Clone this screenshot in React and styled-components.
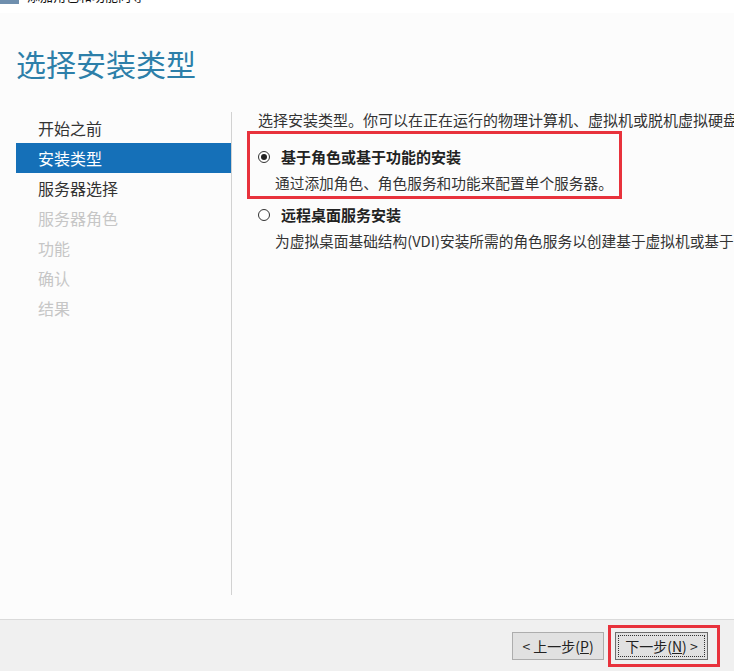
import styled, { createGlobalStyle } from "styled-components";

const GlobalStyle = createGlobalStyle`
  html, body {
    margin: 0;
    padding: 0;
    background: #fcfcfc;
  }
  * {
    box-sizing: border-box;
  }
`;

const steps = [
  { label: "开始之前", state: "done" },
  { label: "安装类型", state: "active" },
  { label: "服务器选择", state: "done" },
  { label: "服务器角色", state: "disabled" },
  { label: "功能", state: "disabled" },
  { label: "确认", state: "disabled" },
  { label: "结果", state: "disabled" },
];

const options = [
  {
    title: "基于角色或基于功能的安装",
    desc: "通过添加角色、角色服务和功能来配置单个服务器。",
    checked: true,
    marked: true,
  },
  {
    title: "远程桌面服务安装",
    desc: "为虚拟桌面基础结构(VDI)安装所需的角色服务以创建基于虚拟机或基于会话的桌面部署。",
    checked: false,
    marked: false,
  },
];

const App = () => {
  return (
    <Window>
      <GlobalStyle />
      <TitleBar>
        <TitleIcon />
        <TitleText>添加角色和功能向导</TitleText>
      </TitleBar>
      <Header>
        <Heading>选择安装类型</Heading>
      </Header>
      <Body>
        <Sidebar>
          {steps.map((step) => (
            <Step key={step.label} $state={step.state}>
              {step.label}
            </Step>
          ))}
        </Sidebar>
        <Content>
          <Intro>
            选择安装类型。你可以在正在运行的物理计算机、虚拟机或脱机虚拟硬盘(VHD)上安装角色和功能。
          </Intro>
          {options.map((opt) => (
            <Frame key={opt.title} $marked={opt.marked}>
              <Option $marked={opt.marked}>
                <OptionHead>
                  <Radio $checked={opt.checked} />
                  <OptionTitle>{opt.title}</OptionTitle>
                </OptionHead>
                <OptionDesc>{opt.desc}</OptionDesc>
              </Option>
            </Frame>
          ))}
        </Content>
      </Body>
      <Footer>
        <Button>
          &lt; 上一步(<u>P</u>)
        </Button>
        <Highlight>
          <Button $focused>
            <FocusRing>
              下一步(<u>N</u>) &gt;
            </FocusRing>
          </Button>
        </Highlight>
      </Footer>
    </Window>
  );
};

export default App;

const Window = styled.div`
  width: 734px;
  height: 671px;
  display: flex;
  flex-direction: column;
  overflow: hidden;
  background: #fcfcfc;
  font-family: "Noto Sans CJK SC", "Microsoft YaHei", sans-serif;
  color: #333;
`;

const TitleBar = styled.div`
  height: 13px;
  flex-shrink: 0;
  display: flex;
  align-items: flex-start;
  gap: 8px;
  background: #ffffff;
  overflow: hidden;
`;

const TitleIcon = styled.div`
  width: 19px;
  height: 4px;
  background: #6f8fae;
`;

const TitleText = styled.div`
  margin-top: -12px;
  font-size: 13px;
  line-height: 16px;
  color: #111;
`;

const Header = styled.div`
  height: 99px;
  flex-shrink: 0;
  padding: 30px 0 0 16px;
`;

const Heading = styled.h1`
  margin: 0;
  font-size: 30px;
  line-height: 40px;
  font-weight: 400;
  color: #2d7fa9;
`;

const Body = styled.div`
  height: 483px;
  flex-shrink: 0;
  display: flex;
  margin-bottom: 24px;
`;

const Sidebar = styled.div`
  width: 232px;
  flex-shrink: 0;
  padding: 1px 0 0 16px;
  border-right: 1px solid #d2d2d2;
`;

const Step = styled.div`
  height: 30px;
  line-height: 30px;
  padding-left: 22px;
  font-size: 16px;
  background: ${(p) => (p.$state === "active" ? "#1570b8" : "transparent")};
  color: ${(p) =>
    p.$state === "active" ? "#fff" : p.$state === "disabled" ? "#c6c6c6" : "#333"};
`;

const Content = styled.div`
  flex: 1;
  min-width: 0;
  margin-top: -2px;
  padding-left: 15px;
  overflow: hidden;
  white-space: nowrap;
`;

const Intro = styled.div`
  padding-left: 11px;
  font-size: 15px;
  line-height: 20px;
  margin-bottom: 1px;
`;

const Frame = styled.div`
  width: 375px;
  border: 3px solid ${(p) => (p.$marked ? "#e8323c" : "transparent")};
`;

const Option = styled.div`
  padding: ${(p) => (p.$marked ? "13px 0 3px 8px" : "3px 0 0 8px")};
`;

const OptionHead = styled.div`
  display: flex;
  align-items: center;
  height: 20px;
`;

const Radio = styled.span`
  width: 12px;
  height: 12px;
  border-radius: 50%;
  border: 1px solid #333;
  background: #fff;
  display: flex;
  align-items: center;
  justify-content: center;
  margin-right: 11px;

  &::after {
    content: "";
    width: 6px;
    height: 6px;
    border-radius: 50%;
    background: #222;
    display: ${(p) => (p.$checked ? "block" : "none")};
  }
`;

const OptionTitle = styled.span`
  font-size: 15px;
  font-weight: 700;
  line-height: 20px;
  color: #222;
`;

const OptionDesc = styled.div`
  margin-top: 6px;
  padding-left: 17px;
  font-size: 14.7px;
  line-height: 20px;
`;

const Footer = styled.div`
  flex: 1;
  display: flex;
  align-items: center;
  justify-content: flex-end;
  padding-right: 14px;
  background: #f0f0f0;
  border-top: 1px solid #dadada;
`;

const Button = styled.div`
  width: ${(p) => (p.$focused ? "93px" : "92px")};
  height: 28px;
  flex-shrink: 0;
  display: flex;
  align-items: center;
  justify-content: center;
  padding: ${(p) => (p.$focused ? "2px" : "0")};
  background: #e1e1e1;
  border: 1px solid ${(p) => (p.$focused ? "#6d6d6d" : "#adadad")};
  font-size: 14px;
  color: #222;

  u {
    text-decoration: underline;
  }
`;

const FocusRing = styled.span`
  width: 100%;
  height: 100%;
  display: flex;
  align-items: center;
  justify-content: center;
  border: 1px dotted #333;
`;

const Highlight = styled.div`
  flex-shrink: 0;
  margin-left: 4px;
  padding: 4px 9px 4px 4px;
  border: 3px solid #e8323c;
`;
